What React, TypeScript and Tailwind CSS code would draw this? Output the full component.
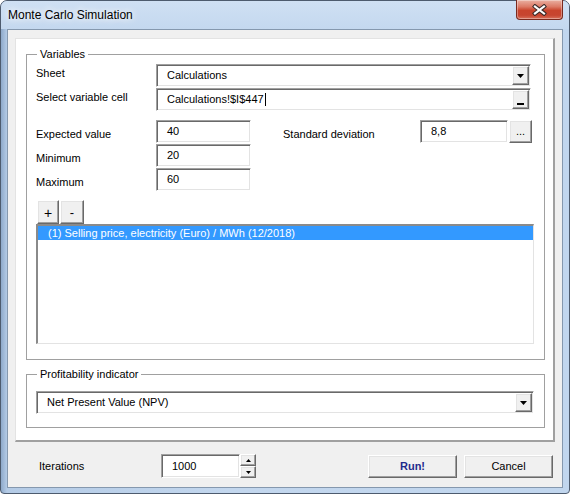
import React from 'react';

// classic Win32 3D edges
const sunken =
  'border border-t-[#a0a0a0] border-l-[#a0a0a0] border-r-white border-b-white bg-white shadow-[inset_1px_1px_0_#696969,inset_-1px_-1px_0_#e3e3e3]';
const raised =
  'border border-t-white border-l-white border-r-[#696969] border-b-[#696969] bg-[#f0f0f0] shadow-[inset_-1px_-1px_0_#a0a0a0,inset_1px_1px_0_#e3e3e3]';

const DownArrow = ({ w = 7, h = 4 }: { w?: number; h?: number }) => (
  <svg width={w} height={h} viewBox={`0 0 ${w} ${h}`}>
    <path d={`M0 0H${w}L${w / 2} ${h}Z`} fill="#000" />
  </svg>
);

const UpArrow = ({ w = 5, h = 3 }: { w?: number; h?: number }) => (
  <svg width={w} height={h} viewBox={`0 0 ${w} ${h}`}>
    <path d={`M0 ${h}H${w}L${w / 2} 0Z`} fill="#000" />
  </svg>
);

interface ComboProps {
  value: React.ReactNode;
  width: string;
  kind: 'drop' | 'ref';
}

const ComboBox: React.FC<ComboProps> = ({ value, width, kind }) => (
  <div className={`${sunken} ${width} flex h-[23px]`}>
    <div className="flex flex-1 items-center pl-[10px] leading-[13px]">{value}</div>
    <div className={`${raised} my-[1px] mr-[1px] flex w-[17px] justify-center`}>
      {kind === 'drop' ? (
        <div className="flex items-center">
          <DownArrow />
        </div>
      ) : (
        <div className="mt-auto mb-[3px] h-[2px] w-[7px] bg-black" />
      )}
    </div>
  </div>
);

const TextBox = ({ value, width }: { value: string; width: string }) => (
  <div className={`${sunken} ${width} flex h-[23px] items-center pl-[10px] leading-[13px]`}>{value}</div>
);

const Row = ({ label, children }: { label: string; children?: React.ReactNode }) => (
  <div className="flex h-[23px]">
    <div className="w-[120px] pt-[8px] leading-[13px]">{label}</div>
    {children}
  </div>
);

export default function App() {
  return (
    <div className="h-[494px] w-[570px] overflow-hidden font-['Liberation_Sans',Arial,sans-serif] text-[11px] text-black">
      <div className="flex h-full w-full flex-col rounded-t-[7px] rounded-b-[4px] border border-[#4d5b6e] bg-[linear-gradient(to_right,#8ea9ca_0px,#b4cbe6_6px,#c3d7ee_40%,#c1d6ee_100%)]">
        {/* title bar */}
        <div className="flex h-[28px] items-start bg-[linear-gradient(to_bottom,#cfe0f3,#c4d8ef)] rounded-t-[6px]">
          <div className="pl-[7px] pt-[7px] text-[12px] leading-[14px] text-black [text-shadow:0_0_6px_#fff,0_0_10px_#fff]">
            Monte Carlo Simulation
          </div>
          <div className="ml-auto mr-[6px] -mt-px flex h-[20px] w-[47px] items-center justify-center rounded-b-[4px] border border-t-0 border-[#7a2a1e] bg-[linear-gradient(to_bottom,#eab0a2_0%,#dc7a66_35%,#c9442c_55%,#c7452f_80%,#d8705a_100%)] shadow-[inset_0_0_0_1px_rgba(255,255,255,0.35)]">
            <svg width="15" height="12" viewBox="0 0 15 12">
              <path d="M3 2.5L12 9.5M12 2.5L3 9.5" stroke="#3b2a28" strokeWidth="4.2" strokeLinecap="square" />
              <path d="M3 2.5L12 9.5M12 2.5L3 9.5" stroke="#fff" strokeWidth="2.2" strokeLinecap="square" />
            </svg>
          </div>
        </div>

        {/* frame body */}
        <div className="flex flex-1 flex-col px-[6px] pb-[5px]">
          <div className="flex flex-1 flex-col border border-[#8598ae] bg-[#f0f0f0]">
            {/* panel */}
            <div className="ml-[7px] mt-[8px] h-[404px] w-[540px] border-l border-t border-r-2 border-b-2 border-l-[#e3e3e3] border-t-[#e3e3e3] border-r-[#a0a0a0] border-b-[#a0a0a0] bg-white">
              <fieldset className="ml-[10px] mt-[9px] w-[519px] border border-[#a0a0a0]">
                <legend className="ml-[10px] px-[3px] leading-[13px]">Variables</legend>
                <div className="pl-[9px] pt-[3px] pb-[15px]">
                  <div className="flex h-[23px]">
                    <div className="w-[120px] pt-[3px] leading-[13px]">Sheet</div>
                    <ComboBox width="w-[375px]" kind="drop" value="Calculations" />
                  </div>
                  <div className="mt-px flex h-[23px]">
                    <div className="w-[120px] pt-[3px] leading-[13px]">Select variable cell</div>
                    <ComboBox
                      width="w-[375px]"
                      kind="ref"
                      value={
                        <>
                          Calculations!$I$447
                          <span className="ml-px inline-block h-[13px] w-px bg-black" />
                        </>
                      }
                    />
                  </div>

                  <div className="mt-[9px]">
                    <Row label="Expected value">
                      <TextBox width="w-[95px]" value="40" />
                      <div className="ml-[32px] w-[137px] pt-[8px] leading-[13px]">Standard deviation</div>
                      <TextBox width="w-[88px]" value="8,8" />
                      <div className={`${raised} ml-px flex w-[23px] justify-center pt-[4px] leading-[13px]`}>...</div>
                    </Row>
                  </div>
                  <div className="mt-px">
                    <Row label="Minimum">
                      <TextBox width="w-[95px]" value="20" />
                    </Row>
                  </div>
                  <div className="mt-px">
                    <Row label="Maximum">
                      <TextBox width="w-[95px]" value="60" />
                    </Row>
                  </div>

                  <div className="mt-[9px] flex h-[24px]">
                    <div className={`${raised} ml-px flex w-[22px] items-center justify-center pt-[2px] text-[14px] leading-[14px]`}>+</div>
                    <div className={`${raised} ml-px flex w-[24px] items-center justify-center pt-[1px] text-[13px] leading-[14px]`}>-</div>
                  </div>
                  <div className="h-[120px] w-[498px] border-t-2 border-l-2 border-r border-b border-t-[#8a8a8a] border-l-[#8a8a8a] border-r-[#e3e3e3] border-b-[#e3e3e3] bg-white">
                    <div className="h-[14px] bg-[#3399ff] pl-[10px] leading-[14px] text-white">
                      (1) Selling price, electricity (Euro) / MWh (12/2018)
                    </div>
                  </div>
                </div>
              </fieldset>

              <fieldset className="ml-[10px] mt-[8px] w-[519px] border border-[#a0a0a0]">
                <legend className="ml-[10px] px-[3px] leading-[13px]">Profitability indicator</legend>
                <div className="pl-[9px] pt-[10px] pb-[13px]">
                  <ComboBox width="w-[498px]" kind="drop" value="Net Present Value (NPV)" />
                </div>
              </fieldset>
            </div>

            {/* bottom row */}
            <div className="mt-[12px] flex h-[24px]">
              <div className="w-[153px] pl-[31px] pt-[6px] leading-[13px]">Iterations</div>
              <div className={`${sunken} flex h-[24px] w-[79px] items-center pl-[10px] leading-[13px]`}>1000</div>
              <div className="flex w-[16px] flex-col">
                <div className={`${raised} flex h-[12px] items-center justify-center`}>
                  <UpArrow />
                </div>
                <div className={`${raised} flex h-[12px] items-center justify-center`}>
                  <DownArrow w={5} h={3} />
                </div>
              </div>
              <button className={`${raised} ml-[112px] mt-px flex h-[23px] w-[89px] items-center justify-center font-bold leading-[13px] text-[#1f2b8c]`}>
                Run!
              </button>
              <button className={`${raised} ml-[7px] mt-px flex h-[23px] w-[89px] items-center justify-center leading-[13px]`}>
                Cancel
              </button>
            </div>
          </div>
        </div>
      </div>
    </div>
  );
}
